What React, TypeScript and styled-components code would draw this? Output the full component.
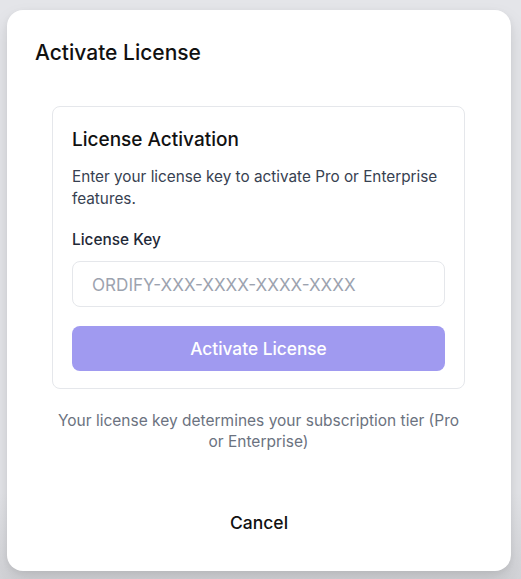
import React from "react";
import styled, { createGlobalStyle } from "styled-components";

const Global = createGlobalStyle`
  html, body { margin: 0; padding: 0; }
  body {
    background: #e4e5e9;
    font-family: Inter, "Noto Sans", "Liberation Sans", sans-serif;
    -webkit-font-smoothing: antialiased;
  }
`;

const Page = styled.div`
  width: 521px;
  height: 579px;
  box-sizing: border-box;
  padding: 10px 10px 8px 7px;
  background: linear-gradient(#e4e5e9 0%, #e4e5e9 85%, #d3d4d8 100%);
`;

const Dialog = styled.div`
  box-sizing: border-box;
  width: 504px;
  height: 561px;
  background: #ffffff;
  border-radius: 16px;
  box-shadow: 0 10px 20px rgba(0, 0, 0, 0.1), 0 2px 6px rgba(0, 0, 0, 0.06);
  padding: 30px 28px 29px 28px;
  display: flex;
  flex-direction: column;
`;

const Title = styled.h2`
  margin: 0;
  font-size: 21px;
  line-height: 26px;
  font-weight: 500;
  color: #111111;
`;

const Body = styled.div`
  padding: 40px 18px 0 17px;
  display: flex;
  flex-direction: column;
`;

const Card = styled.div`
  border: 1px solid #e5e7eb;
  border-radius: 8px;
  padding: 19px 19px 17px 19px;
  display: flex;
  flex-direction: column;
`;

const CardTitle = styled.h3`
  margin: 0;
  font-size: 19px;
  line-height: 28px;
  font-weight: 500;
  color: #111111;
`;

const Desc = styled.p`
  margin: 12px -4px 0 0;
  font-size: 15.3px;
  line-height: 22px;
  color: #374151;
`;

const Label = styled.label`
  margin-top: 20px;
  font-size: 15.4px;
  line-height: 20px;
  font-weight: 500;
  color: #1f2937;
`;

const Input = styled.input`
  margin-top: 11px;
  box-sizing: border-box;
  height: 46px;
  width: 100%;
  border: 1px solid #e5e7eb;
  border-radius: 8px;
  padding: 0 19px;
  font-family: inherit;
  font-size: 17.1px;
  color: #111;
  outline: none;
  &::placeholder { color: #9ca3af; }
`;

const PrimaryButton = styled.button`
  margin-top: 19px;
  height: 45px;
  width: 100%;
  border: none;
  border-radius: 8px;
  background: #a09af0;
  color: #ffffff;
  font-family: inherit;
  font-size: 17.3px;
  font-weight: 500;
`;

const Note = styled.p`
  margin: 21px 0 0;
  text-align: center;
  font-size: 15.5px;
  line-height: 21px;
  color: #6b7280;
`;

const Footer = styled.div`
  margin-top: auto;
  display: flex;
  justify-content: center;
`;

const TextButton = styled.button`
  height: 40px;
  padding: 0 16px;
  border: none;
  background: transparent;
  font-family: inherit;
  font-size: 17.5px;
  font-weight: 500;
  color: #111111;
`;

export default function App() {
  return (
    <>
      <Global />
      <Page>
        <Dialog>
          <Title>Activate License</Title>
          <Body>
            <Card>
              <CardTitle>License Activation</CardTitle>
              <Desc>Enter your license key to activate Pro or Enterprise features.</Desc>
              <Label>License Key</Label>
              <Input placeholder="ORDIFY-XXX-XXXX-XXXX-XXXX" />
              <PrimaryButton disabled>Activate License</PrimaryButton>
            </Card>
            <Note>Your license key determines your subscription tier (Pro or Enterprise)</Note>
          </Body>
          <Footer>
            <TextButton>Cancel</TextButton>
          </Footer>
        </Dialog>
      </Page>
    </>
  );
}
